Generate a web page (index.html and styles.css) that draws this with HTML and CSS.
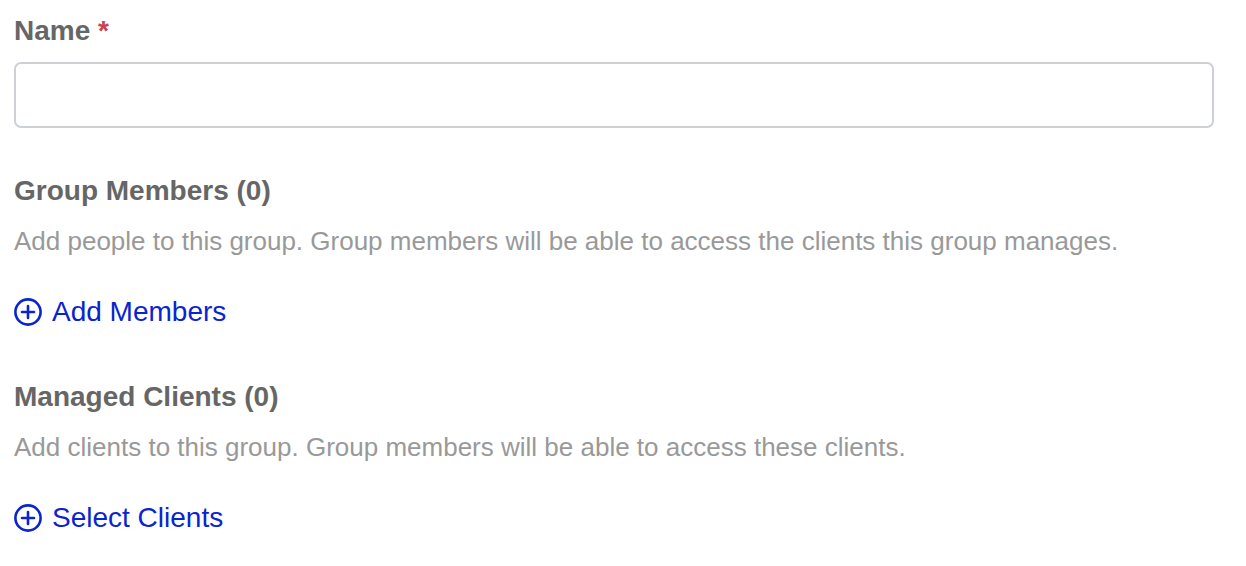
FILE: index.html
```html
<!DOCTYPE html>
<html lang="en">
<head>
  <meta charset="UTF-8" />
  <meta name="viewport" content="width=device-width, initial-scale=1.0"/>
  <title>New Group</title>
  <link rel="stylesheet" href="styles.css">
</head>
<body>

  <form class="group-form">
    <div class="field">
      <label for="name">Name <span class="required">*</span></label>
      <input type="text" id="name" name="name" required />
    </div>

    <section class="section">
      <h2>Group Members (0)</h2>
      <p>Add people to this group. Group members will be able to access the clients this group manages.</p>
      <button type="button" class="add-btn">
        <svg class="icon" viewBox="0 0 28 28" aria-hidden="true">
          <circle cx="14" cy="14" r="12.6" />
          <path d="M14 8v12M8 14h12" />
        </svg>
        Add Members
      </button>
    </section>

    <section class="section">
      <h2>Managed Clients (0)</h2>
      <p>Add clients to this group. Group members will be able to access these clients.</p>
      <button type="button" class="add-btn">
        <svg class="icon" viewBox="0 0 28 28" aria-hidden="true">
          <circle cx="14" cy="14" r="12.6" />
          <path d="M14 8v12M8 14h12" />
        </svg>
        Select Clients
      </button>
    </section>
  </form>

</body>
</html>
```
FILE: styles.css
```css
* {
  box-sizing: border-box;
}

body {
  margin: 0;
  background: #fff;
  color: #666;
  font-family: "Liberation Sans", Arial, sans-serif;
  font-size: 28px;
  line-height: 32px;
}

.group-form {
  padding: 15px 32px 15px 14px;
}

label, h2 {
  display: block;
  margin: 0;
  font-size: 28px;
  font-weight: bold;
}

.required {
  color: #c8434a;
}

input {
  display: block;
  width: 100%;
  height: 66px;
  margin-top: 15px;
  padding: 0 16px;
  border: 2px solid #cdd1d5;
  border-radius: 7px;
  background: #fff;
  color: #666;
  font: inherit;
}

.field {
  margin-bottom: 47px;
}

.section {
  margin-bottom: 53px;
}

.section:last-child {
  margin-bottom: 0;
}

.section p {
  margin: 18px 0 39px;
  color: #999;
  font-size: 26px;
}

.add-btn {
  display: flex;
  align-items: center;
  gap: 10px;
  padding: 0;
  border: none;
  background: none;
  color: #0a24cf;
  font: inherit;
  cursor: pointer;
}

.icon {
  width: 28px;
  height: 28px;
  fill: none;
  stroke: currentColor;
  stroke-width: 2.6;
  stroke-linecap: round;
}
```
